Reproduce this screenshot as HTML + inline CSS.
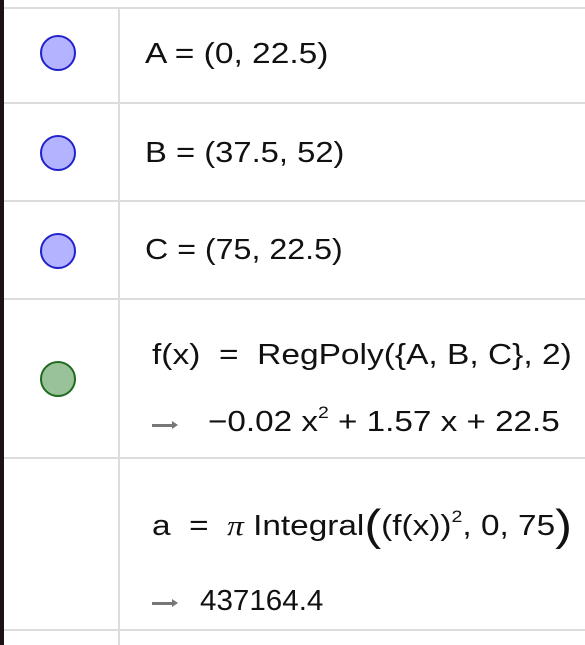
<!DOCTYPE html>
<html><head><style>
body{margin:0;width:585px;height:645px;background:#fff;position:relative;overflow:hidden;font-family:"Liberation Sans",sans-serif;color:#111}
.bar{position:absolute;left:0;top:0;width:4px;height:645px;background:#1c1117}
.h{position:absolute;left:4px;right:0;height:2px;background:#dcdcdc}
.v{position:absolute;left:118px;width:2px;top:8px;height:637px;background:#dcdcdc}
.c{position:absolute;width:36px;height:36px;border-radius:50%;box-sizing:border-box}
.b{background:#b3b3ff;border:2px solid #2222cc}
.g{background:#99c299;border:2px solid #1f6b1f}
.t{position:absolute;font-size:29px;white-space:nowrap;transform-origin:0 50%}
.ar{position:absolute;width:22px;height:3px;background:#777}
.ar:after{content:"";position:absolute;right:-4px;top:-3px;border-left:6px solid #777;border-top:4.5px solid transparent;border-bottom:4.5px solid transparent}
sup{font-size:17px;vertical-align:13px}
</style></head><body>
<div class="bar"></div>
<div class="h" style="top:7px"></div>
<div class="h" style="top:102px"></div>
<div class="h" style="top:200px"></div>
<div class="h" style="top:298px"></div>
<div class="h" style="top:457px"></div>
<div class="h" style="top:629px"></div>
<div class="v"></div>
<div class="c b" style="left:40px;top:35px"></div>
<div class="c b" style="left:40px;top:135px"></div>
<div class="c b" style="left:40px;top:233px"></div>
<div class="c g" style="left:40px;top:361px"></div>
<div class="t" style="left:145px;top:38px;transform:scaleX(1.155)">A = (0, 22.5)</div>
<div class="t" style="left:145px;top:137px;transform:scaleX(1.13)">B = (37.5, 52)</div>
<div class="t" style="left:145px;top:234px;transform:scaleX(1.11)">C = (75, 22.5)</div>
<div class="t" style="left:152px;top:339px;transform:scaleX(1.155)">f(x) &nbsp;= &nbsp;RegPoly({A, B, C}, 2)</div>
<div class="ar" style="left:152px;top:424px"></div>
<div class="t" style="left:208px;top:403px;transform:scaleX(1.146)">−0.02 x<sup>2</sup> + 1.57 x + 22.5</div>
<div class="t" style="left:152px;top:507px;transform:scaleX(1.15)">a &nbsp;= &nbsp;<i style="font-family:'Liberation Serif',serif">π</i> Integral<span style="font-size:44px;vertical-align:-5px;line-height:0">(</span>(f(x))<sup>2</sup>, 0, 75<span style="font-size:44px;vertical-align:-5px;line-height:0">)</span></div>
<div class="ar" style="left:152px;top:602px"></div>
<div class="t" style="left:200px;top:585px;transform:scaleX(1.02)">437164.4</div>
</body></html>
